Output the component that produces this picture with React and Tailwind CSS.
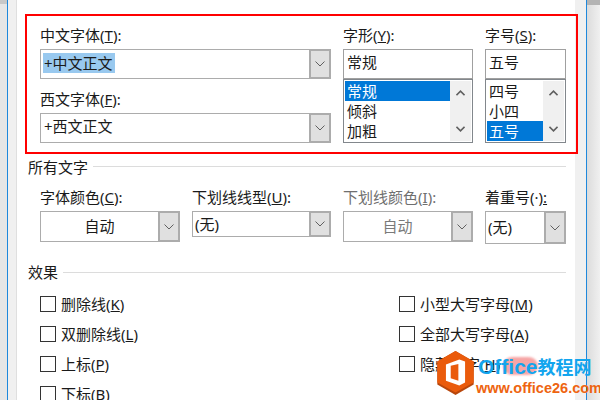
const font = { fontFamily: '"Noto Sans", "Noto Sans CJK SC", sans-serif' };

const Chevron = ({ className = 'w-[10px] h-[6px]', width = 1 }) => (
  <svg viewBox="0 0 10 6" className={className} fill="none" stroke="currentColor" strokeWidth={width}>
    <path d="M0.5 0.5 L5 5 L9.5 0.5" />
  </svg>
);

const Label = ({ children, hot, tail = '):', disabled }) => (
  <div className={`h-5 mb-1 leading-5 whitespace-nowrap ${disabled ? 'text-[#6f6f6f]' : 'text-[#1a1a1a]'}`}>
    {children}(<span className="underline">{hot}</span>{tail}
  </div>
);

const Combo = ({ children, h = 'h-[30px]', center, disabled }) => (
  <div className={`flex ${h} border border-[#acacac] bg-white`}>
    <div className={`flex-1 flex items-center min-w-0 ${center ? 'justify-center' : 'pl-[2px]'} ${disabled ? 'text-[#7a7a7a]' : 'text-[#1a1a1a]'}`}>
      {children}
    </div>
    <div className="w-[22px] -my-px -mr-px flex items-center justify-center bg-[#e0e0e0] border-2 border-[#acacac] text-[#606060]">
      <Chevron />
    </div>
  </div>
);

const ListBox = ({ items, selected, selWidth }) => (
  <div className="h-[64px] flex border border-[#82878c] bg-white p-px">
    <div className="flex-1 flex flex-col">
      {items.map((item) => (
        <div
          key={item}
          className={`h-5 leading-5 pl-[2px] ${item === selected ? 'bg-[#0078d7] text-white' : 'text-[#1a1a1a]'}`}
          style={{ width: selWidth }}
        >
          {item}
        </div>
      ))}
    </div>
    <div className="w-[21px] bg-[#f0f0f0] flex flex-col items-center justify-between py-[9px] text-[#606060]">
      <Chevron width={1.8} className="w-[9px] h-[6px] rotate-180" />
      <Chevron width={1.8} className="w-[9px] h-[6px]" />
    </div>
  </div>
);

const Section = ({ title, lineClass = 'mt-[-2px]' }) => (
  <div className="flex items-center h-5 pl-[11px] pr-[9px] gap-[5px] text-[#1a1a1a]">
    <span className="leading-5">{title}</span>
    <div className={`flex-1 h-px bg-[#dcdcdc] ${lineClass}`} />
  </div>
);

const Check = ({ children, hot }) => (
  <div className="flex items-center h-4 gap-[5px] whitespace-nowrap text-[#1a1a1a]">
    <div className="w-4 h-4 border border-[#333333] bg-white shrink-0" />
    <span>
      {children}(<span className="underline">{hot}</span>)
    </span>
  </div>
);

const Watermark = () => (
  <div className="absolute left-[437px] top-[351px] w-[160px] h-[48px]">
    <div className="absolute left-[66px] top-[6px] w-[35px] h-[18px] rounded-full bg-[#f6a5a5] blur-[1px]" />
    <svg viewBox="0 0 38 46" className="absolute left-0 top-0 w-[37px] h-[44px]">
      <path d="M19 0 L38 11 L38 35 L19 46 L0 35 L0 11 Z" fill="#b8470c" />
      <path d="M19 0 L38 11 L38 33 L19 43.5 L0 33 L0 11 Z" fill="#ea5b0c" />
      <path
        fillRule="evenodd"
        d="M9 14 L23 9 L29 11 L29 33 L23 36 L9 31 Z M14 15.5 L14 28.5 L22 31 L22 13.5 Z"
        fill="#fff"
      />
    </svg>
    <div className="absolute left-[41px] top-[3px] whitespace-nowrap leading-[26px] font-bold text-[#12a5ee]">
      <span className="text-[21px] font-['Liberation_Sans']">Office</span>
      <span className="text-[18px]">教程网</span>
    </div>
    <div className="absolute left-[39px] top-[28px] whitespace-nowrap text-[14.5px] leading-[18px] font-bold font-['Liberation_Sans'] text-[#ee6410]">
      www.office26.com
    </div>
  </div>
);

export default function App() {
  return (
    <div className="relative flex w-[600px] h-[400px] overflow-hidden bg-white text-[15px]" style={font}>
      <div className="w-[7px] bg-[#e6e6e6] border-t-4 border-[#c8c8c8]" />
      <div className="w-px bg-[#1e88dc]" />
      <div className="w-[8px] bg-[#f0f0f0]" />
      <div className="w-px bg-[#dfdfdf]" />

      <div className="w-[558px] pt-[14px]">
        <div className="relative w-[553px] h-[140px] ml-[8px] border-2 border-[#ff0000] pt-[9px] pl-[13px]">
          <div className="grid grid-cols-[291px_130px_81px] gap-x-[12px]">
            <div>
              <Label hot="T">中文字体</Label>
              <Combo>
                <span className="bg-[#99c9ef] leading-5 pl-px pr-[2px] mb-[2px]">+中文正文</span>
              </Combo>
              <div className="h-[10px]" />
              <Label hot="F">西文字体</Label>
              <Combo>
                <span className="pl-px mb-[4px]">+西文正文</span>
              </Combo>
            </div>
            <div>
              <Label hot="Y">字形</Label>
              <div className="h-[30px] border border-[#a0a0a0] px-[3px] leading-[25px] text-[#1a1a1a]">常规</div>
              <ListBox items={['常规', '倾斜', '加粗']} selected="常规" selWidth="105px" />
            </div>
            <div>
              <Label hot="S">字号</Label>
              <div className="h-[30px] border border-[#a0a0a0] px-[3px] leading-[25px] text-[#1a1a1a]">五号</div>
              <ListBox items={['四号', '小四', '五号']} selected="五号" selWidth="56px" />
            </div>
          </div>
        </div>

        <div className="mt-[3px]">
          <Section title="所有文字" />
        </div>
        <div className="mt-[10px] pl-[23px] grid grid-cols-[140px_139px_130px_81px] gap-x-[12px] h-[57px]">
          <div>
            <Label hot="C">字体颜色</Label>
            <Combo h="h-[31px]" center>自动</Combo>
          </div>
          <div>
            <Label hot="U">下划线线型</Label>
            <Combo h="h-[26px]">(无)</Combo>
          </div>
          <div>
            <Label hot="I" disabled>下划线颜色</Label>
            <Combo h="h-[31px]" center disabled>自动</Combo>
          </div>
          <div>
            <div className="h-5 mb-1 leading-5 whitespace-nowrap text-[#1a1a1a]">
              着重号(·)<span className="underline">:</span>
            </div>
            <Combo h="h-[33px]">(无)</Combo>
          </div>
        </div>

        <div className="mt-[18px]">
          <Section title="效果" lineClass="" />
        </div>
        <div className="mt-[14px] pl-[23px] grid grid-cols-[359px_1fr] gap-y-[14px]">
          <Check hot="K">删除线</Check>
          <Check hot="M">小型大写字母</Check>
          <Check hot="L">双删除线</Check>
          <Check hot="A">全部大写字母</Check>
          <Check hot="P">上标</Check>
          <Check hot="H">隐藏文字</Check>
          <Check hot="B">下标</Check>
        </div>
      </div>

      <div className="w-[11px] bg-[#f0f0f0]" />
      <div className="w-px bg-[#1e88dc]" />
      <div className="flex-1 border-t-[5px] border-[#b4b4b4] bg-gradient-to-r from-[#dcdcdc] to-[#f0f0f0]" />

      <Watermark />
    </div>
  );
}
